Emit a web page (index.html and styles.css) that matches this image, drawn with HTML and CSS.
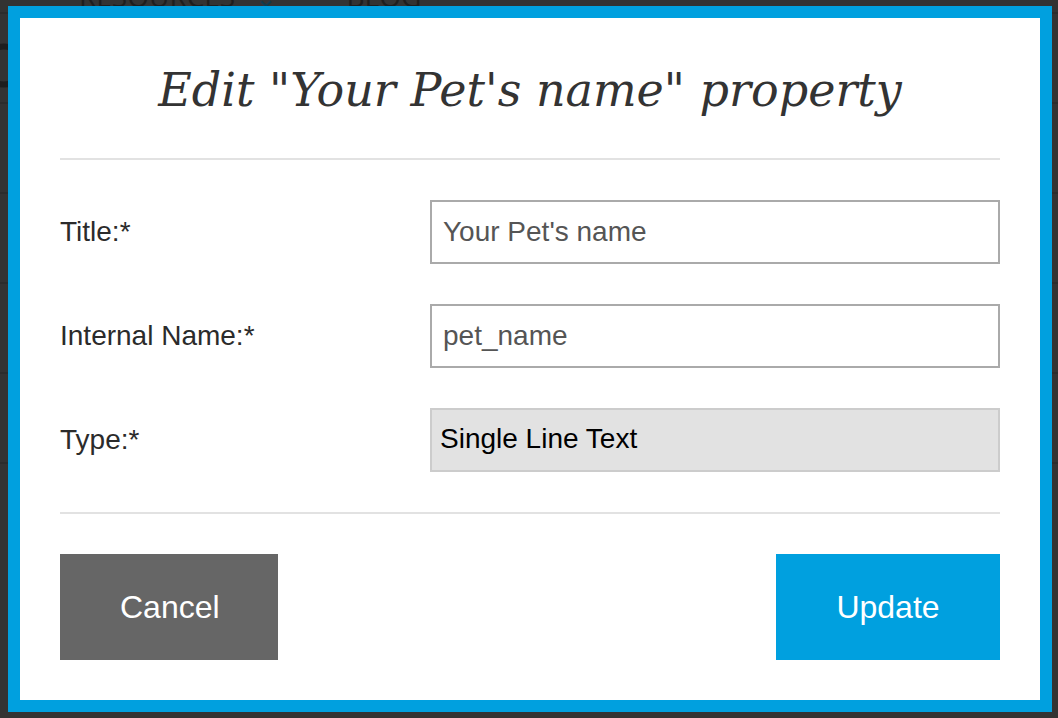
FILE: index.html
```html
<!DOCTYPE html>
<html lang="en">
<head>
<meta charset="utf-8">
<title>Edit property</title>
<link rel="stylesheet" href="styles.css">
</head>
<body>
<div class="backdrop">
  <nav class="nav">
    <span class="nav-item">Resources <span class="chev">&#8964;</span></span>
    <span class="nav-item">Blog</span>
  </nav>
  <div class="bg-row bg-big">O</div>
  <div class="bg-row"></div>
  <div class="bg-row"></div>
  <div class="bg-row bg-small">e</div>
  <div class="bg-row"></div>
  <div class="bg-row bg-small">e</div>
</div>

<div class="modal">
  <h1 class="modal-title">Edit "Your Pet's name" property</h1>
  <hr class="divider">
  <form class="form">
    <label class="field-label" for="title">Title:*</label>
    <input class="field-input" id="title" type="text" value="Your Pet's name">

    <label class="field-label" for="iname">Internal Name:*</label>
    <input class="field-input" id="iname" type="text" value="pet_name">

    <label class="field-label" for="type">Type:*</label>
    <div class="field-select" id="type">Single Line Text</div>
  </form>
  <hr class="divider">
  <div class="actions">
    <button class="btn btn-cancel" type="button">Cancel</button>
    <button class="btn btn-update" type="button">Update</button>
  </div>
</div>
</body>
</html>
```

FILE: styles.css
```css
* { box-sizing: border-box; }

html, body {
  margin: 0;
  padding: 0;
  height: 100%;
}

body {
  background: #333333;
  font-family: "Liberation Sans", Arial, sans-serif;
  overflow: hidden;
  position: relative;
}

/* page behind the overlay */
.backdrop {
  display: flex;
  flex-direction: column;
}

.nav {
  display: flex;
  gap: 70px;
  padding-left: 79px;
  margin-top: -18px;
  height: 30px;
}

.nav-item {
  font-family: "Open Sans", "Liberation Sans", sans-serif;
  font-size: 28px;
  line-height: 28px;
  text-transform: uppercase;
  color: #1e1e1e;
}

.chev {
  color: #123a4c;
  font-size: 26px;
  margin-left: 12px;
}

.bg-row {
  height: 90px;
  border-top: 2px solid #2c2c2c;
  font-family: "Open Sans", "Liberation Sans", sans-serif;
  color: #1e1e1e;
  margin-left: -20px;
  padding-top: 20px;
}

.bg-big { font-size: 60px; font-weight: 600; line-height: 1; }
.bg-small { font-size: 34px; line-height: 1; padding-top: 30px; }

/* modal overlay */
.modal {
  position: absolute;
  left: 8px;
  top: 6px;
  width: 1044px;
  height: 706px;
  border: 12px solid #00a0df;
  background: #ffffff;
  padding: 0 40px 40px;
  display: flex;
  flex-direction: column;
}

.modal-title {
  margin: 0;
  padding-top: 44px;
  height: 140px;
  font-family: "DejaVu Serif", Georgia, serif;
  font-style: italic;
  font-weight: normal;
  font-size: 46px;
  line-height: 56px;
  color: #333333;
  text-align: center;
  letter-spacing: 0;
}

.divider {
  margin: 0;
  border: 0;
  height: 2px;
  background: #e2e2e2;
}

.form {
  display: grid;
  grid-template-columns: 370px 570px;
  row-gap: 40px;
  align-items: center;
  padding: 40px 0;
}

.field-label {
  font-size: 28px;
  color: #2b2b2b;
}

.field-input,
.field-select {
  height: 64px;
  width: 100%;
  font-family: "Liberation Sans", Arial, sans-serif;
  font-size: 28px;
  margin: 0;
  display: flex;
  align-items: center;
}

.field-input {
  border: 2px solid #aaaaaa;
  padding: 0 11px;
  color: #555555;
  background: #ffffff;
  outline: none;
}

.field-select {
  border: 2px solid #cccccc;
  background: #e2e2e2;
  color: #000000;
  padding: 0 8px 2px;
}

.actions {
  display: flex;
  justify-content: space-between;
  padding-top: 40px;
}

.btn {
  height: 106px;
  border: 0;
  margin: 0;
  padding: 0 60px;
  font-family: "Liberation Sans", Arial, sans-serif;
  font-size: 32px;
  color: #ffffff;
  cursor: pointer;
}

.btn-cancel { background: #666666; width: 218px; }
.btn-update { background: #00a0df; width: 224px; }
```
